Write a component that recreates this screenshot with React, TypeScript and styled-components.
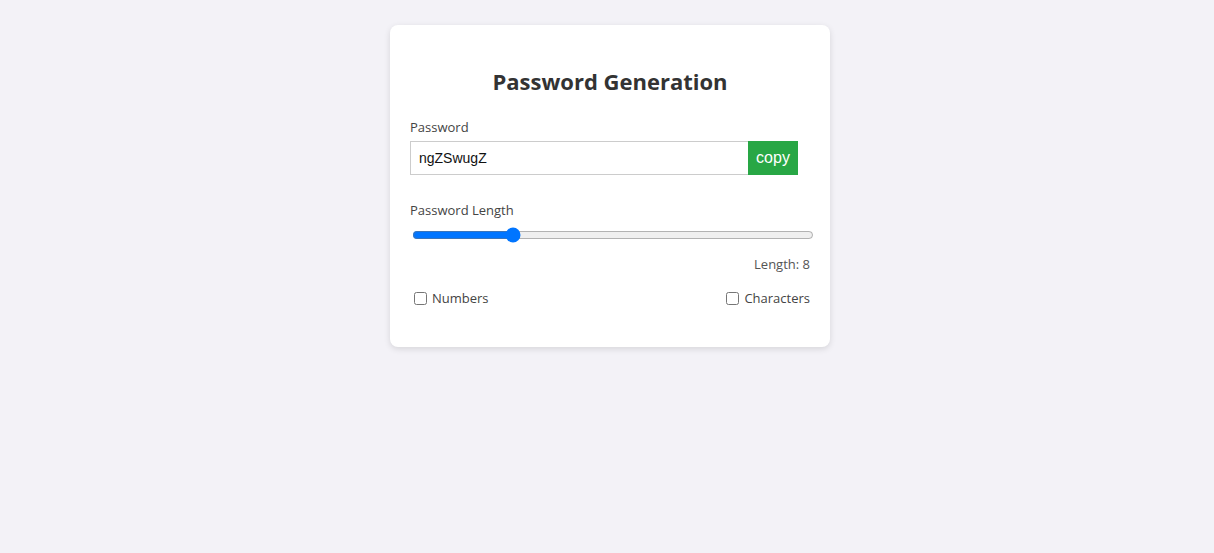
import React, { useState } from "react";
import styled, { createGlobalStyle } from "styled-components";

const Global = createGlobalStyle`
  html, body { margin: 0; padding: 0; background: #f3f2f7; }
  body { font-family: "Open Sans", "Noto Sans", sans-serif; color: #333; }
  * { box-sizing: border-box; }
`;

const Page = styled.div`
  display: flex;
  justify-content: center;
  align-items: flex-start;
  padding: 25px 0 0 6px;
  min-height: 553px;
`;

const Card = styled.div`
  width: 440px;
  background: #fff;
  border-radius: 8px;
  box-shadow: 0 2px 6px rgba(0, 0, 0, 0.12);
  padding: 20px 20px 40px;
  display: flex;
  flex-direction: column;
`;

const Title = styled.h2`
  margin: 21px 0 22px;
  text-align: center;
  font-size: 22px;
  font-weight: 700;
  color: #333;
  line-height: 30px;
`;

const Label = styled.label`
  font-size: 13px;
  color: #444;
  line-height: 18px;
  margin-bottom: 5px;
`;

const InputRow = styled.div`
  display: flex;
  margin-bottom: 26px;
`;

const PasswordInput = styled.input`
  width: 338px;
  height: 34px;
  border: 1px solid #ccc;
  border-right: none;
  padding: 0 8px;
  font-family: "Liberation Sans", Arial, sans-serif;
  font-size: 14px;
  color: #111;
  outline: none;
`;

const CopyButton = styled.button`
  width: 50px;
  height: 34px;
  border: none;
  background: #28a745;
  color: #fff;
  font-family: "Liberation Sans", Arial, sans-serif;
  font-size: 16px;
  padding: 0;
  cursor: pointer;
`;

const Range = styled.input`
  width: calc(100% + 2px);
  margin: 3px 0 12px 2px;
  accent-color: #0075ff;
`;

const LengthText = styled.div`
  text-align: right;
  font-size: 13px;
  color: #555;
  line-height: 18px;
  margin-bottom: 16px;
`;

const Options = styled.div`
  display: flex;
  justify-content: space-between;
`;

const Check = styled.label`
  display: flex;
  align-items: center;
  font-size: 13px;
  color: #444;
  line-height: 18px;
  input { margin: 0 5px 0 4px; width: 13px; height: 13px; }
`;

export default function App() {
  const [len, setLen] = useState(8);
  return (
    <>
      <Global />
      <Page>
        <Card>
          <Title>Password Generation</Title>
          <Label>Password</Label>
          <InputRow>
            <PasswordInput readOnly value="ngZSwugZ" />
            <CopyButton>copy</CopyButton>
          </InputRow>
          <Label>Password Length</Label>
          <Range
            type="range"
            min={1}
            max={30}
            value={len}
            onChange={(e) => setLen(Number(e.target.value))}
          />
          <LengthText>Length: {len}</LengthText>
          <Options>
            <Check>
              <input type="checkbox" />
              Numbers
            </Check>
            <Check>
              <input type="checkbox" />
              Characters
            </Check>
          </Options>
        </Card>
      </Page>
    </>
  );
}
